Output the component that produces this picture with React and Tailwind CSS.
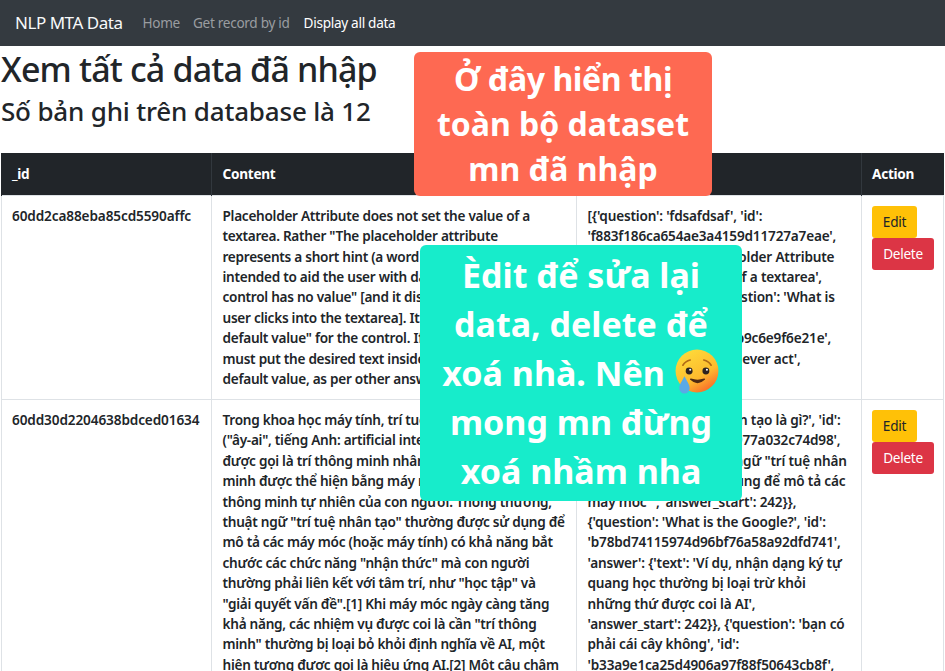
const row1Content = [
  "Placeholder Attribute does not set the value of a",
  'textarea. Rather "The placeholder attribute',
  "represents a short hint (a word or short phrase)",
  "intended to aid the user with data entry when the",
  'control has no value" [and it disappears when the',
  "user clicks into the textarea]. It is not a",
  'default value" for the control. If you want that, you',
  "must put the desired text inside the textarea as",
  "default value, as per other answers",
];

const row1Data = [
  "[{'question': 'fdsafdsaf', 'id':",
  "'f883f186ca654ae3a4159d11727a7eae',",
  "'answer': {'text': 'Placeholder Attribute",
  "does not set the value of a textarea',",
  "'answer_start': 0}}, {'question': 'What is",
  "the placeholder?', 'id':",
  "'a1c3f9d27e4b4f0b9e1fb9c6e9f6e21e',",
  "'answer': {'text': 'but it never act',",
  "'answer_start': 12}}]",
];

const row2Content = [
  "Trong khoa học máy tính, trí tuệ nhân tạo hay AI",
  '("ây-ai", tiếng Anh: artificial intelligence), đôi khi',
  "được gọi là trí thông minh nhân tạo, là trí thông",
  "minh được thể hiện bằng máy móc, trái ngược với",
  "thông minh tự nhiên của con người. Thông thường,",
  'thuật ngữ "trí tuệ nhân tạo" thường được sử dụng để',
  "mô tả các máy móc (hoặc máy tính) có khả năng bắt",
  'chước các chức năng "nhận thức" mà con người',
  'thường phải liên kết với tâm trí, như "học tập" và',
  '"giải quyết vấn đề".[1] Khi máy móc ngày càng tăng',
  'khả năng, các nhiệm vụ được coi là cần "trí thông',
  'minh" thường bị loại bỏ khỏi định nghĩa về AI, một',
  "hiện tượng được gọi là hiệu ứng AI.[2] Một câu châm",
];

const row2Data = [
  "[{'question': 'Trí tuệ nhân tạo là gì?', 'id':",
  "'4a7de2c1b8f04e6d52b977a032c74d98',",
  "'answer': {'text': 'thuật ngữ \"trí tuệ nhân",
  "tạo\" thường được sử dụng để mô tả các",
  "máy móc\"', 'answer_start': 242}},",
  "{'question': 'What is the Google?', 'id':",
  "'b78bd74115974d96bf76a58a92dfd741',",
  "'answer': {'text': 'Ví dụ, nhận dạng ký tự",
  "quang học thường bị loại trừ khỏi",
  "những thứ được coi là AI',",
  "'answer_start': 242}}, {'question': 'bạn có",
  "phải cái cây không', 'id':",
  "'b33a9e1ca25d4906a97f88f50643cb8f',",
];

const Lines = ({ items }) => (
  <>
    {items.map((line, i) => (
      <div key={i} className="whitespace-nowrap">{line}</div>
    ))}
  </>
);

const Actions = () => (
  <div className="flex flex-col items-start">
    <button className="h-[32px] w-[45px] rounded-[3px] bg-[#ffc107] text-[13.6px] text-[#212529]">Edit</button>
    <button className="h-[32px] w-[62px] rounded-[3px] bg-[#dc3545] text-[13.6px] text-white">Delete</button>
  </div>
);

const Row = ({ id, content, data }) => (
  <tr className="border-b border-[#dee2e6] align-top">
    <td className="border-x border-[#dee2e6] px-[10px] pt-[10.2px] pb-[9.4px] tracking-[-0.12px]">{id}</td>
    <td className="border-r border-[#dee2e6] px-[10.5px] pt-[10.2px] pb-[9.4px]"><Lines items={content} /></td>
    <td className="border-r border-[#dee2e6] px-[10.5px] pt-[10.2px] pb-[9.4px] tracking-[-0.18px]"><Lines items={data} /></td>
    <td className="border-r border-[#dee2e6] px-[10px] pt-[10.5px] font-normal"><Actions /></td>
  </tr>
);

const CryingFace = () => (
  <svg viewBox="0 0 44 44" className="inline-block h-[46px] w-[46px] align-[-9px]">
    <defs>
      <linearGradient id="face" x1="0.2" y1="0" x2="0.8" y2="1">
        <stop offset="0" stopColor="#fedc3a" />
        <stop offset="0.62" stopColor="#fdbb2e" />
        <stop offset="1" stopColor="#f8602a" />
      </linearGradient>
    </defs>
    <circle cx="22" cy="21" r="20.5" fill="url(#face)" />
    <path d="M8.5 15.5 Q11 11.5 15.5 10.5 M35.5 15.5 Q33 11.5 28.5 10.5" stroke="#b06a16" strokeWidth="1.6" fill="none" strokeLinecap="round" />
    <circle cx="14.5" cy="21" r="3.3" fill="#2e2320" />
    <circle cx="30.5" cy="21" r="3.3" fill="#2e2320" />
    <circle cx="15.5" cy="19.8" r="1" fill="#ffffff" />
    <circle cx="31.5" cy="19.8" r="1" fill="#ffffff" />
    <path d="M16 29 Q22.5 35 29 29 Q22.5 31 16 29Z" fill="#4e2a14" stroke="#4e2a14" strokeWidth="1.4" strokeLinejoin="round" />
    <path d="M10 26 C7.5 31 5 34 5 37.5 A5 5 0 0 0 15 37.5 C15 34 12.5 31 10 26Z" fill="#5aa9e6" />
  </svg>
);

export default function App() {
  return (
    <div className="relative h-[671px] w-[945px] overflow-hidden bg-white font-['Noto_Sans',sans-serif] text-[#212529]">
      <nav className="flex h-[46px] items-center bg-[#343a40] pl-[15px] text-[13.6px] tracking-[-0.3px]">
        <span className="mr-[20px] text-[17px] tracking-[-0.47px] text-[#f8f9fa]">NLP MTA Data</span>
        <span className="mr-[13px] text-[#9a9da0]">Home</span>
        <span className="mr-[14px] text-[#9a9da0]">Get record by id</span>
        <span className="text-white">Display all data</span>
      </nav>

      <div className="pl-px">
        <h1 className="text-[34px] leading-[47px] font-medium tracking-[-0.84px]">Xem tất cả data đã nhập</h1>
        <h2 className="h-[60px] pt-px text-[26px] leading-[34px] font-medium tracking-[-0.18px]">Số bản ghi trên database là 12</h2>

        <table className="w-[942px] table-fixed border-collapse text-[13.6px] leading-[20.4px] font-semibold tracking-[-0.27px]">
          <colgroup>
            <col className="w-[210px]" />
            <col className="w-[365px]" />
            <col className="w-[285px]" />
            <col className="w-[82px]" />
          </colgroup>
          <thead>
            <tr className="h-[42px] border-b border-[#dee2e6] bg-[#212529] text-left text-white">
              <th className="border-x border-l-[#212529] border-r-[#32383e] px-[10px] font-bold">_id</th>
              <th className="border-r border-[#32383e] px-[10.5px] font-bold">Content</th>
              <th className="border-r border-[#32383e] px-[10.5px] font-bold">Data</th>
              <th className="px-[10px] font-bold">Action</th>
            </tr>
          </thead>
          <tbody>
            <Row id="60dd2ca88eba85cd5590affc" content={row1Content} data={row1Data} />
            <Row id="60dd30d2204638bdced01634" content={row2Content} data={row2Data} />
          </tbody>
        </table>
      </div>

      <div className="absolute top-[52px] left-[414px] flex h-[144px] w-[298px] flex-col items-center justify-center rounded-[6px] bg-[#fe6952] pb-[2px] text-[32px] leading-[45px] font-bold text-white">
        <div className="tracking-[-0.4px]">Ở đây hiển thị</div>
        <div>toàn bộ dataset</div>
        <div>mn đã nhập</div>
      </div>

      <div className="absolute top-[245px] left-[420px] flex h-[256px] w-[322px] flex-col items-center justify-center rounded-[6px] bg-[#17eccb] text-[34px] leading-[49px] font-bold text-white">
        <div>Èdit để sửa lại</div>
        <div>data, delete để</div>
        <div>xoá nhà. Nên <CryingFace /></div>
        <div>mong mn đừng</div>
        <div>xoá nhầm nha</div>
      </div>
    </div>
  );
}
